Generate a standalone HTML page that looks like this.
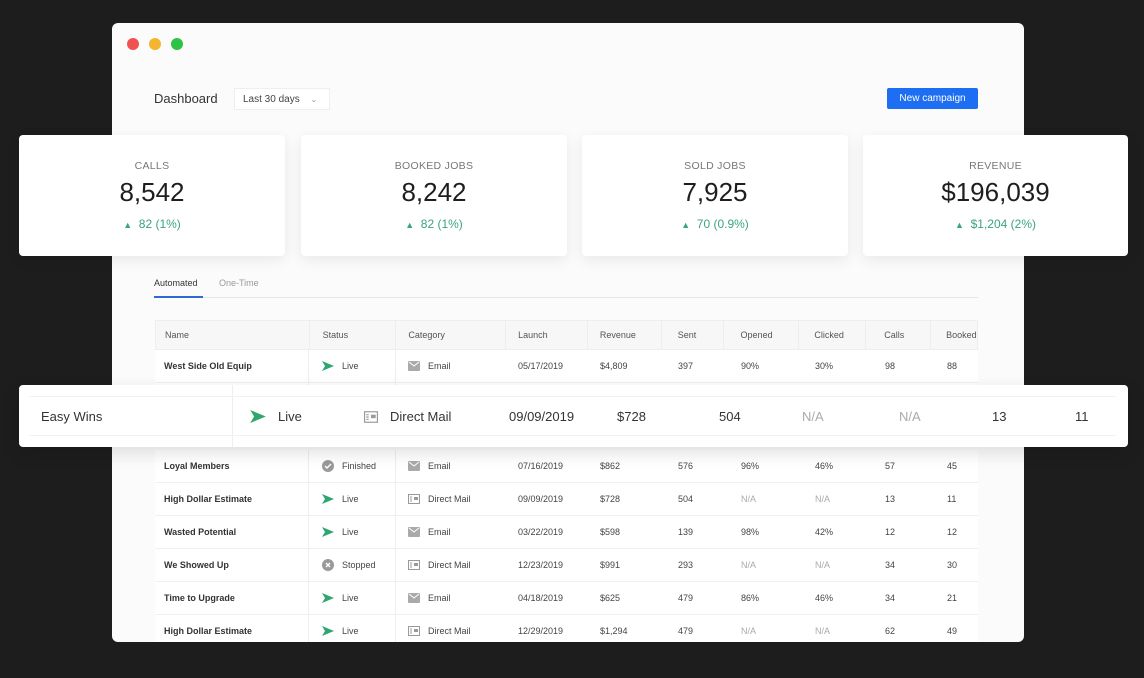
<!DOCTYPE html>
<html><head><meta charset="utf-8"><style>
*{margin:0;padding:0;box-sizing:border-box}
body{width:1144px;height:678px;background:#1d1d1d;font-family:"Liberation Sans",sans-serif;position:relative;overflow:hidden;color:#333}
.win{position:absolute;left:112px;top:23px;width:912px;height:619px;background:#fbfbfb;border-radius:6px;overflow:hidden}
.dot{position:absolute;top:15px;width:12px;height:12px;border-radius:50%}
.abs{position:absolute;white-space:nowrap}
.card{position:absolute;top:135px;width:266px;height:121px;background:#fff;border-radius:4px;box-shadow:0 4px 14px rgba(0,0,0,.08);text-align:center}
.card .t{margin-top:25px;font-size:10.5px;color:#777;letter-spacing:.3px}
.card .n{margin-top:5px;font-size:26px;color:#1e1e1e}
.card .d{margin-top:9px;font-size:12px;color:#3aa57a}
.row{position:absolute;left:43px;width:823px;height:33px;display:flex;font-size:9px;color:#444;background:#fff;border-bottom:1px solid #f0f0f0}
.row>div{display:flex;align-items:center;white-space:nowrap}
.hdr{background:#f7f7f7;color:#555;height:30px;border:1px solid #eee}
.c1{width:154px;padding-left:9px;border-right:1px solid #eee;font-weight:bold;color:#333}
.hdr .c1{font-weight:normal;color:#555}
.c2{width:87px;padding-left:13px;border-right:1px solid #eee}
.c3{width:110px;padding-left:12px}
.c4{width:82px;padding-left:12px}
.c5{width:74px;padding-left:12px}
.c6{width:62px;padding-left:16px}
.c7{width:76px;padding-left:17px}
.c8{width:67px;padding-left:15px}
.c9{width:65px;padding-left:18px}
.c10{width:46px;padding-left:15px}
.hdr>div{border-right:1px solid #eee}
.na{color:#aaa}
.ic{margin-right:8px;display:inline-block}
.ov{position:absolute;left:19px;top:385px;width:1109px;height:62px;background:#fff;border-radius:4px;box-shadow:0 6px 18px rgba(0,0,0,.12);font-size:13px;color:#333}
.ov span{position:absolute;top:24px;white-space:nowrap}
</style></head><body>
<div class="win">
<div class="dot" style="left:15px;background:#f0524f"></div>
<div class="dot" style="left:37px;background:#f5b431"></div>
<div class="dot" style="left:59px;background:#2ec246"></div>
<div class="abs" style="left:42px;top:68px;font-size:13px;color:#333">Dashboard</div>
<div class="abs" style="left:122px;top:65px;width:96px;height:22px;background:#fff;border:1px solid #eee;font-size:10px;color:#444;padding:5px 0 0 8px">Last 30 days <span style="color:#999;margin-left:8px;font-size:8px">&#8964;</span></div>
<div class="abs" style="left:775px;top:65px;width:91px;height:21px;background:#1d6ef2;color:#fff;font-size:10px;text-align:center;line-height:21px;border-radius:2px">New campaign</div>
<div class="abs" style="left:42px;top:255px;font-size:9px;color:#333">Automated</div>
<div class="abs" style="left:107px;top:255px;font-size:9px;color:#999">One-Time</div>
<div class="abs" style="left:42px;top:274px;width:824px;height:1px;background:#e6e6e6"></div>
<div class="abs" style="left:42px;top:273px;width:49px;height:2px;background:#2e6ad1"></div>

<div class="row hdr" style="top:297px"><div class="c1">Name</div><div class="c2">Status</div><div class="c3">Category</div><div class="c4">Launch</div><div class="c5">Revenue</div><div class="c6">Sent</div><div class="c7">Opened</div><div class="c8">Clicked</div><div class="c9">Calls</div><div class="c10" style="border:none">Booked</div></div>
</div>

<svg width="0" height="0" style="position:absolute"><defs>
<symbol id="live" viewBox="0 0 12 10"><path d="M0 0 L12 5 L0 10 L3 5 Z" fill="#2fa66f"/></symbol>
<symbol id="mail" viewBox="0 0 12 10"><rect x="0" y="0" width="12" height="10" rx="1" fill="#aaa"/><path d="M1 1 L6 5 L11 1" stroke="#fff" stroke-width="1" fill="none"/></symbol>
<symbol id="dm" viewBox="0 0 12 10"><rect x=".5" y=".5" width="11" height="9" fill="none" stroke="#999"/><rect x="6" y="3" width="4" height="3" fill="#999"/><path d="M2 3h2M2 5h2M2 7h2" stroke="#999"/></symbol>
<symbol id="fin" viewBox="0 0 12 12"><circle cx="6" cy="6" r="6" fill="#999"/><path d="M3 6l2 2 4-4" stroke="#fff" stroke-width="1.4" fill="none"/></symbol>
<symbol id="stop" viewBox="0 0 12 12"><circle cx="6" cy="6" r="6" fill="#999"/><path d="M4 4l4 4M8 4l-4 4" stroke="#fff" stroke-width="1.4"/></symbol>
</defs></svg>

<div style="position:absolute;left:112px;top:23px;width:912px;height:619px;overflow:hidden">
<div class="row" style="top:327px"><div class="c1">West Side Old Equip</div><div class="c2"><svg class="ic" width="12" height="10"><use href="#live"/></svg>Live</div><div class="c3"><svg class="ic" width="12" height="10"><use href="#mail"/></svg>Email</div><div class="c4">05/17/2019</div><div class="c5">$4,809</div><div class="c6">397</div><div class="c7">90%</div><div class="c8">30%</div><div class="c9">98</div><div class="c10">88</div></div>
<div class="row" style="top:360px"><div class="c1"></div><div class="c2"></div></div>
<div class="row" style="top:427px"><div class="c1">Loyal Members</div><div class="c2"><svg class="ic" width="12" height="12"><use href="#fin"/></svg>Finished</div><div class="c3"><svg class="ic" width="12" height="10"><use href="#mail"/></svg>Email</div><div class="c4">07/16/2019</div><div class="c5">$862</div><div class="c6">576</div><div class="c7">96%</div><div class="c8">46%</div><div class="c9">57</div><div class="c10">45</div></div>
<div class="row" style="top:460px"><div class="c1">High Dollar Estimate</div><div class="c2"><svg class="ic" width="12" height="10"><use href="#live"/></svg>Live</div><div class="c3"><svg class="ic" width="12" height="10"><use href="#dm"/></svg>Direct Mail</div><div class="c4">09/09/2019</div><div class="c5">$728</div><div class="c6">504</div><div class="c7 na">N/A</div><div class="c8 na">N/A</div><div class="c9">13</div><div class="c10">11</div></div>
<div class="row" style="top:493px"><div class="c1">Wasted Potential</div><div class="c2"><svg class="ic" width="12" height="10"><use href="#live"/></svg>Live</div><div class="c3"><svg class="ic" width="12" height="10"><use href="#mail"/></svg>Email</div><div class="c4">03/22/2019</div><div class="c5">$598</div><div class="c6">139</div><div class="c7">98%</div><div class="c8">42%</div><div class="c9">12</div><div class="c10">12</div></div>
<div class="row" style="top:526px"><div class="c1">We Showed Up</div><div class="c2"><svg class="ic" width="12" height="12"><use href="#stop"/></svg>Stopped</div><div class="c3"><svg class="ic" width="12" height="10"><use href="#dm"/></svg>Direct Mail</div><div class="c4">12/23/2019</div><div class="c5">$991</div><div class="c6">293</div><div class="c7 na">N/A</div><div class="c8 na">N/A</div><div class="c9">34</div><div class="c10">30</div></div>
<div class="row" style="top:559px"><div class="c1">Time to Upgrade</div><div class="c2"><svg class="ic" width="12" height="10"><use href="#live"/></svg>Live</div><div class="c3"><svg class="ic" width="12" height="10"><use href="#mail"/></svg>Email</div><div class="c4">04/18/2019</div><div class="c5">$625</div><div class="c6">479</div><div class="c7">86%</div><div class="c8">46%</div><div class="c9">34</div><div class="c10">21</div></div>
<div class="row" style="top:592px"><div class="c1">High Dollar Estimate</div><div class="c2"><svg class="ic" width="12" height="10"><use href="#live"/></svg>Live</div><div class="c3"><svg class="ic" width="12" height="10"><use href="#dm"/></svg>Direct Mail</div><div class="c4">12/29/2019</div><div class="c5">$1,294</div><div class="c6">479</div><div class="c7 na">N/A</div><div class="c8 na">N/A</div><div class="c9">62</div><div class="c10">49</div></div>
</div>

<div class="card" style="left:19px"><div class="t">CALLS</div><div class="n">8,542</div><div class="d"><span style="font-size:9px">&#9650;</span>&nbsp; 82 (1%)</div></div>
<div class="card" style="left:301px"><div class="t">BOOKED JOBS</div><div class="n">8,242</div><div class="d"><span style="font-size:9px">&#9650;</span>&nbsp; 82 (1%)</div></div>
<div class="card" style="left:582px"><div class="t">SOLD JOBS</div><div class="n">7,925</div><div class="d"><span style="font-size:9px">&#9650;</span>&nbsp; 70 (0.9%)</div></div>
<div class="card" style="left:863px;width:265px"><div class="t">REVENUE</div><div class="n">$196,039</div><div class="d"><span style="font-size:9px">&#9650;</span>&nbsp; $1,204 (2%)</div></div>

<div class="ov">
<div style="position:absolute;left:213px;top:0;width:1px;height:62px;background:#eee"></div>
<div style="position:absolute;left:10px;right:12px;top:11px;height:1px;background:#f2f2f2"></div>
<div style="position:absolute;left:10px;right:12px;top:50px;height:1px;background:#f2f2f2"></div>
<span style="left:22px">Easy Wins</span>
<svg style="position:absolute;left:231px;top:25px" width="16" height="13"><use href="#live"/></svg>
<span style="left:259px">Live</span>
<svg style="position:absolute;left:345px;top:26px" width="14" height="12"><use href="#dm"/></svg>
<span style="left:371px">Direct Mail</span>
<span style="left:490px">09/09/2019</span>
<span style="left:598px">$728</span>
<span style="left:700px">504</span>
<span style="left:783px;color:#aaa">N/A</span>
<span style="left:880px;color:#aaa">N/A</span>
<span style="left:973px">13</span>
<span style="left:1056px">11</span>
</div>
</body></html>
